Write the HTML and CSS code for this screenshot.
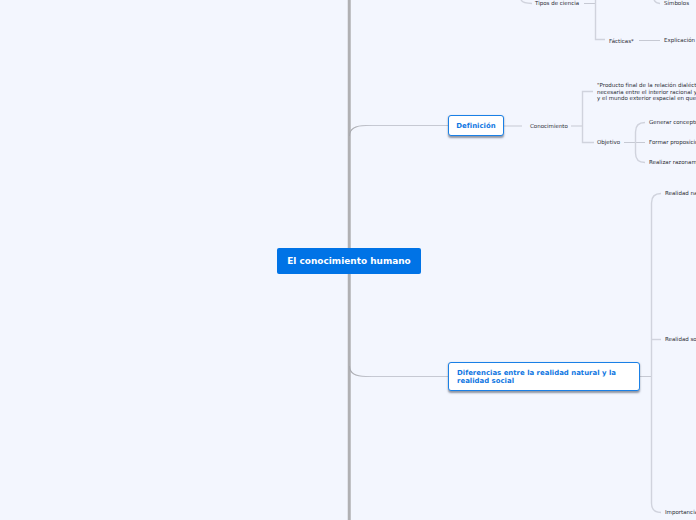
FILE: index.html
```html
<!DOCTYPE html>
<html lang="es">
<head>
<meta charset="utf-8">
<title>El conocimiento humano</title>
<link rel="stylesheet" href="styles.css">
</head>
<body>
<main class="canvas">
  <svg class="links" width="696" height="520" viewBox="0 0 696 520" fill="none">
    <defs>
      <linearGradient id="fade" gradientUnits="userSpaceOnUse" x1="349" y1="0" x2="372" y2="0">
        <stop offset="0" stop-color="#a6a7ac"/>
        <stop offset="1" stop-color="#c6c9d3"/>
      </linearGradient>
    </defs>
    <path class="trunk" d="M349.250 0V520"/>
    <path class="curve" d="M349.500 136Q349.500 125.500 366 125.500H448"/>
    <path class="curve" d="M349.500 366Q349.500 376.500 366 376.500H448"/>
    <path class="link" d="M504 126H522"/>
    <path class="link" d="M571 126H582.500"/>
    <path class="bracket" d="M593 91.500H582.500V142.500H594"/>
    <path class="link" d="M624 142.500H645"/>
    <path class="bracket" d="M645 122.500Q635.500 122.500 635.500 132V153Q635.500 162.500 645 162.500"/>
    <path class="bracket" d="M521 0Q523 3.500 532 3.500"/>
    <path class="link" d="M584 3.500H595.500"/>
    <path class="bracket" d="M595.500 0V39.500H605"/>
    <path class="link" d="M639 40.500H660"/>
    <path class="bracket" d="M654 0Q656 3.500 660 3.500"/>
    <path class="link" d="M640 376.500H651.500"/>
    <path class="bracket" d="M661 193.500Q651.500 193.500 651.500 203V503Q651.500 512.500 661 512.500"/>
    <path class="bracket" d="M651.500 339.500H661"/>
  </svg>

  <div class="root">El conocimiento humano</div>
  <div class="topic topic-def">Definición</div>
  <div class="topic topic-dif">Diferencias entre la realidad natural y la realidad social</div>

  <span class="label l-tipos">Tipos de ciencia</span>
  <span class="label l-simbolos">Símbolos</span>
  <span class="label l-facticas">Fácticas*</span>
  <span class="label l-explicacion">Explicación</span>
  <span class="label l-conocimiento">Conocimiento</span>
  <p class="label l-producto">"Producto final de la relación dialéctica<br>necesaria entre el interior racional y subjetivo<br>y el mundo exterior espacial en que vivimos"</p>
  <span class="label l-objetivo">Objetivo</span>
  <span class="label l-generar">Generar conceptos</span>
  <span class="label l-formar">Formar proposiciones</span>
  <span class="label l-realizar">Realizar razonamientos</span>
  <span class="label l-natural">Realidad natural</span>
  <span class="label l-social">Realidad social</span>
  <span class="label l-importancia">Importancia</span>
</main>
</body>
</html>
```
FILE: styles.css
```css
* { box-sizing: border-box; }
html, body { margin: 0; padding: 0; }
body { background: #f3f6fe; font-family: "DejaVu Sans", sans-serif; }
.canvas {
  position: relative;
  width: 696px;
  height: 520px;
  overflow: hidden;
  background: #f3f6fe;
}
.links { position: absolute; left: 0; top: 0; }
.trunk { stroke: #b0b0b3; stroke-width: 3; }
.link { stroke: #c6c9d3; stroke-width: 1; }
.bracket { stroke: #d0d3dd; stroke-width: 1.400; }
.curve { stroke: url(#fade); stroke-width: 1.100; }
.root {
  position: absolute;
  left: 277px;
  top: 247.500px;
  width: 144px;
  height: 26px;
  padding-top: 1px;
  display: flex;
  align-items: center;
  justify-content: center;
  background: #0073e6;
  border-radius: 2px;
  color: #fff;
  font-size: 8.950px;
  font-weight: 700;
  white-space: nowrap;
}
.topic {
  position: absolute;
  background: #fff;
  border: 1.500px solid #1a80e6;
  border-radius: 3px;
  box-shadow: 0 1.500px 2px rgba(60, 70, 90, .55);
  color: #0f77e2;
  font-size: 6.950px;
  font-weight: 700;
  line-height: 8px;
}
.topic-def {
  left: 448px;
  top: 115px;
  width: 56px;
  height: 21px;
  display: flex;
  align-items: center;
  justify-content: center;
}
.topic-dif {
  left: 448px;
  top: 362px;
  width: 192px;
  height: 29px;
  padding: 6px 8px;
}
.label {
  position: absolute;
  margin: 0;
  color: #2b2d35;
  font-size: 5.500px;
  line-height: 6.500px;
  white-space: nowrap;
}
.l-tipos { left: 535px; top: 0; }
.l-simbolos { left: 664px; top: 0; }
.l-facticas { left: 609px; top: 38px; }
.l-explicacion { left: 664px; top: 37px; }
.l-conocimiento { left: 530px; top: 123px; }
.l-producto { left: 597px; top: 82px; }
.l-objetivo { left: 597px; top: 139px; }
.l-generar { left: 649px; top: 119px; }
.l-formar { left: 649px; top: 139px; }
.l-realizar { left: 649px; top: 159px; }
.l-natural { left: 665px; top: 190px; }
.l-social { left: 665px; top: 336px; }
.l-importancia { left: 665px; top: 509px; }
```
